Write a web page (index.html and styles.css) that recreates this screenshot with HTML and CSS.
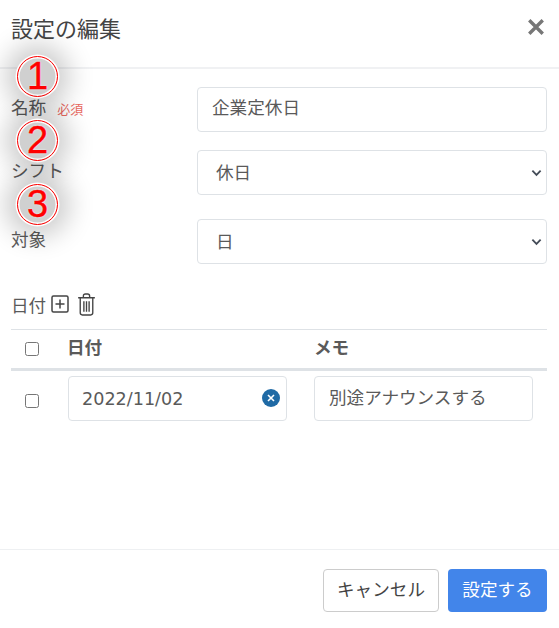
FILE: index.html
```html
<!DOCTYPE html>
<html lang="ja">
<head>
    <meta charset="UTF-8">
    <title>設定の編集</title>
    <link rel="stylesheet" href="styles.css">
</head>
<body>
    <div class="modal">
        <div class="modal-header">
            <h1>設定の編集</h1>
            <svg class="close" viewBox="0 0 16 16"><path d="M2 2 L14 14 M14 2 L2 14"/></svg>
        </div>
        <div class="modal-body">
            <div class="form-row row-name">
                <div class="form-label">名称<span class="required">必須</span></div>
                <input class="form-input" type="text" value="企業定休日">
            </div>
            <div class="form-row row-shift">
                <div class="form-label">シフト</div>
                <div class="form-select"><span>休日</span><svg viewBox="0 0 12 8"><path d="M1.5 1.5 L6 6 L10.5 1.5"/></svg></div>
            </div>
            <div class="form-row row-target">
                <div class="form-label">対象</div>
                <div class="form-select"><span>日</span><svg viewBox="0 0 12 8"><path d="M1.5 1.5 L6 6 L10.5 1.5"/></svg></div>
            </div>

            <div class="date-title">
                <span>日付</span>
                <svg class="icon-add" viewBox="0 0 18 18"><rect x="1" y="1" width="16" height="16" rx="1.5"/><path d="M9 4.5 V13.5 M4.5 9 H13.5"/></svg>
                <svg class="icon-trash" viewBox="0 0 18 22"><path d="M1 4.5 H17 M6 4.5 V3 Q6 1 8 1 H10 Q12 1 12 3 V4.5 M3 4.5 V19 Q3 21 5 21 H13 Q15 21 15 19 V4.5 M6.5 8 V18 M9 8 V18 M11.5 8 V18"/></svg>
            </div>

            <div class="date-table">
                <div class="table-head">
                    <div class="cell-check"><span class="checkbox"></span></div>
                    <div class="cell-date">日付</div>
                    <div class="cell-memo">メモ</div>
                </div>
                <div class="table-row">
                    <div class="cell-check"><span class="checkbox"></span></div>
                    <div class="cell-date">
                        <div class="date-input"><span>2022/11/02</span>
                            <svg class="clear" viewBox="0 0 18 18"><circle cx="9" cy="9" r="9"/><path d="M6 6 L12 12 M12 6 L6 12"/></svg>
                        </div>
                    </div>
                    <div class="cell-memo"><div class="memo-input">別途アナウンスする</div></div>
                </div>
            </div>
        </div>
        <div class="modal-footer">
            <button class="btn btn-cancel" type="button">キャンセル</button>
            <button class="btn btn-submit" type="button">設定する</button>
        </div>

        <!-- 注釈の番号 -->
        <div class="marker marker-1">1</div>
        <div class="marker marker-2">2</div>
        <div class="marker marker-3">3</div>
    </div>
</body>
</html>
```

FILE: styles.css
```css
* {
    box-sizing: border-box;
}
body {
    margin: 0;
    background-color: #fff;
    font-family: "Noto Sans CJK JP", "Noto Sans", sans-serif;
    color: #5a5a5a;
}
.modal {
    position: relative;
    width: 559px;
    height: 628px;
    overflow: hidden;
}
.modal-header {
    height: 69px;
    padding: 0 14px 14px 11px;
    border-bottom: 2px solid #f0f1f3;
    display: flex;
    align-items: center;
    justify-content: space-between;
}
.modal-header h1 {
    margin: 0;
    font-size: 22px;
    font-weight: 400;
    color: #444;
}
.close {
    width: 18px;
    height: 18px;
    fill: none;
    stroke: #777;
    stroke-width: 3;
}
.modal-body {
    height: 480px;
    padding: 18px 12px 0 11px;
}
.form-row {
    display: flex;
}
.row-name {
    margin-bottom: 18px;
}
.row-shift {
    margin-bottom: 24px;
}
.row-target {
    margin-bottom: 27px;
}
.form-label {
    width: 186px;
    flex: none;
    padding-top: 8px;
    font-size: 17.6px;
    line-height: 24px;
}
.required {
    margin-left: 11px;
    font-size: 13px;
    color: #ea6a5f;
}
.form-input,
.form-select,
.memo-input,
.date-input {
    border: 1px solid #dee2e6;
    border-radius: 4px;
    background-color: #fff;
    font-family: inherit;
    font-size: 17.6px;
    color: #5a5a5a;
}
.form-input,
.form-select {
    flex: 1;
    height: 45px;
    padding: 0 14px 6px;
    outline: none;
}
.form-select {
    padding: 0 0 0 18px;
    display: flex;
    align-items: center;
    justify-content: space-between;
}
.form-select span {
    padding-bottom: 3px;
}
.form-select svg {
    width: 11px;
    height: 8px;
    margin-right: 4px;
    fill: none;
    stroke: #444c58;
    stroke-width: 2;
}
.date-title {
    height: 26px;
    display: flex;
    align-items: center;
    font-size: 17.6px;
}
.icon-add {
    width: 18px;
    height: 18px;
    margin-left: 5px;
    fill: none;
    stroke: #444;
    stroke-width: 1.5;
}
.icon-trash {
    width: 19px;
    height: 23px;
    margin-left: 8px;
    fill: none;
    stroke: #444;
    stroke-width: 1.3;
}
.date-table {
    margin-top: 12px;
    border-top: 1px solid #dee2e6;
}
.table-head {
    height: 41px;
    padding-bottom: 5px;
    display: flex;
    align-items: center;
    border-bottom: 3px solid #dee2e6;
    font-size: 17.6px;
    font-weight: 700;
}
.table-head .cell-check {
    padding-top: 5px;
}
.table-row {
    padding-top: 5px;
    display: flex;
    align-items: center;
}
.table-row .cell-check {
    padding-top: 4px;
}
.cell-check {
    width: 57px;
    flex: none;
    padding-left: 14px;
    display: flex;
}
.cell-date {
    width: 246px;
    flex: none;
}
.table-head .cell-date {
    margin-left: -1px;
    margin-right: 1px;
}
.checkbox {
    width: 14px;
    height: 14px;
    border: 1px solid #767676;
    border-radius: 2.5px;
}
.date-input {
    width: 219px;
    height: 45px;
    padding: 0 6px 0 13px;
    display: flex;
    align-items: center;
    justify-content: space-between;
    font-family: "DejaVu Sans", sans-serif;
}
.date-input span {
    padding-top: 1px;
}
.clear {
    width: 18px;
    height: 18px;
    margin-top: -2px;
}
.clear circle {
    fill: #1f6aa5;
}
.clear path {
    fill: none;
    stroke: #fff;
    stroke-width: 1.6;
}
.memo-input {
    width: 219px;
    height: 45px;
    padding: 0 14px 5px;
    display: flex;
    align-items: center;
    white-space: nowrap;
}
.modal-footer {
    height: 79px;
    padding: 19px 12px 0 0;
    border-top: 1px solid #eef0f2;
    display: flex;
    justify-content: flex-end;
    align-items: flex-start;
    gap: 9px;
}
.btn {
    height: 43px;
    padding: 0 0 5px;
    border-radius: 4px;
    font-family: inherit;
    font-size: 17.6px;
}
.btn-cancel {
    width: 116px;
    border: 1px solid #ccc;
    background-color: #fff;
    color: #444;
}
.btn-submit {
    width: 99px;
    border: none;
    background-color: #4285ea;
    color: #fff;
}
.marker {
    position: absolute;
    left: 17px;
    width: 41px;
    height: 41px;
    border: 1px solid #f00;
    border-radius: 50%;
    background-color: #d0d0d0;
    box-shadow: 0 0 0 1.5px #fff, inset 0 0 0 1.5px #fff, 0 0 26px 12px rgba(0, 0, 0, 0.2);
    color: #f00;
    font-family: "Liberation Sans", sans-serif;
    font-size: 38px;
    line-height: 39px;
    text-align: center;
    -webkit-text-stroke: 0.4px #f00;
    text-shadow: 0 0 2px #fff;
}
.marker-1 {
    top: 56px;
}
.marker-2 {
    top: 120px;
}
.marker-3 {
    top: 184px;
}
```
